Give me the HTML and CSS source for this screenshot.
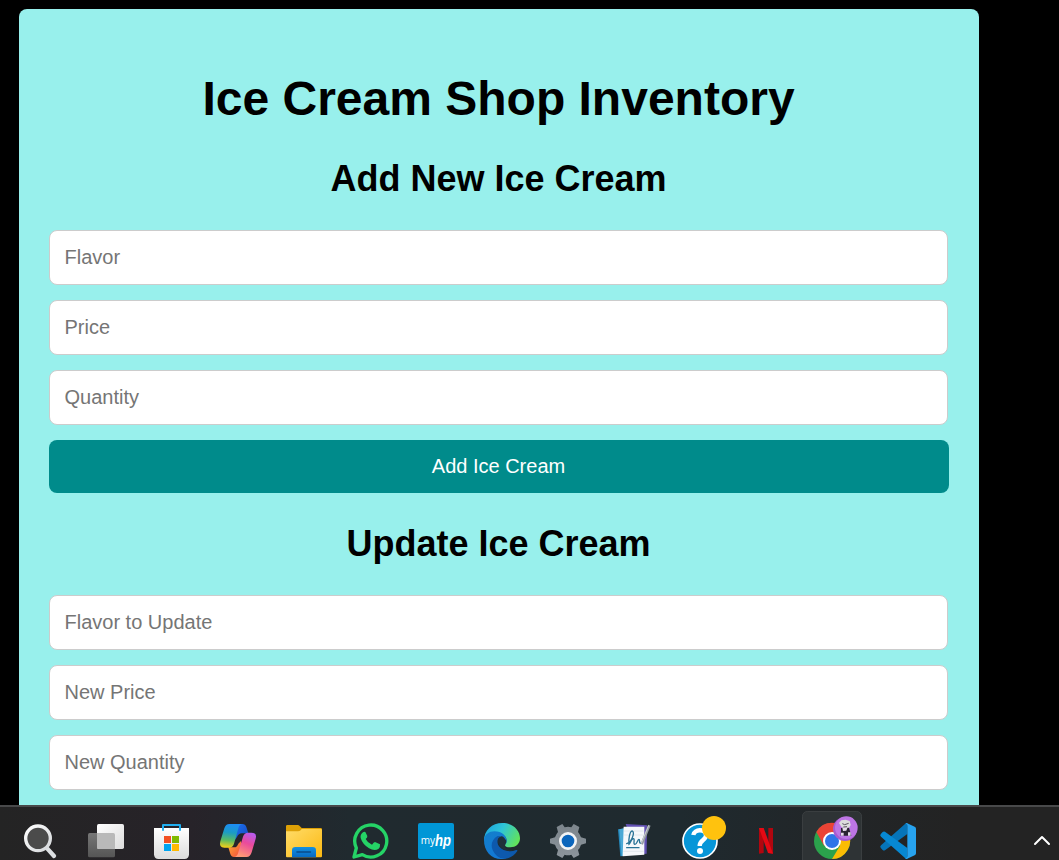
FILE: index.html
```html
<!DOCTYPE html>
<html lang="en">
<head>
<meta charset="utf-8">
<title>Ice Cream Shop Inventory</title>
<link rel="stylesheet" href="styles.css">
</head>
<body>
<main class="viewport">
  <section class="container">
    <h1 class="title">Ice Cream Shop Inventory</h1>
    <h2 class="subtitle">Add New Ice Cream</h2>
    <form class="form">
      <input class="field" type="text" placeholder="Flavor">
      <input class="field" type="text" placeholder="Price">
      <input class="field" type="text" placeholder="Quantity">
      <button class="submit" type="button">Add Ice Cream</button>
    </form>
    <h2 class="subtitle subtitle-update">Update Ice Cream</h2>
    <form class="form">
      <input class="field" type="text" placeholder="Flavor to Update">
      <input class="field" type="text" placeholder="New Price">
      <input class="field" type="text" placeholder="New Quantity">
    </form>
  </section>
</main>
<footer class="taskbar">
  <nav class="apps">
    <!-- Search -->
    <svg class="app" viewBox="21 21 198 159">
      <defs><linearGradient id="lens" x1="0" y1="0" x2="1" y2="1"><stop offset="0" stop-color="#fff"/><stop offset="1" stop-color="#d4d7da"/></linearGradient></defs>
      <path d="M142 146L162 168" stroke="#dde0e3" stroke-width="13" stroke-linecap="round"/>
      <circle cx="114" cy="115" r="37" fill="#4b4b4b" stroke="url(#lens)" stroke-width="10"/>
    </svg>
    <!-- Task view -->
    <svg class="app" viewBox="219 21 198 159">
      <defs>
        <linearGradient id="pane" x1="0" y1="0" x2="1" y2="1"><stop offset="0" stop-color="#fff"/><stop offset="1" stop-color="#dcdcdc"/></linearGradient>
        <linearGradient id="back" x1="0" y1="0" x2="0" y2="1"><stop offset="0" stop-color="#777"/><stop offset="1" stop-color="#555"/></linearGradient>
      </defs>
      <rect x="264" y="99" width="81" height="73" rx="5" fill="url(#back)"/>
      <rect x="291" y="72" width="81" height="75" rx="5" fill="url(#pane)"/>
      <path d="M291 99h49q5 0 5 5v43h-49q-5 0-5-5z" fill="#b9b9b9"/>
    </svg>
    <!-- Store -->
    <svg class="app" viewBox="417 21 198 159">
      <defs><linearGradient id="bag" x1="0" y1="0" x2="0" y2="1"><stop offset="0" stop-color="#fff"/><stop offset="1" stop-color="#dcdcdc"/></linearGradient></defs>
      <path d="M462 84h105v79q0 14-14 14h-77q-14 0-14-14z" fill="url(#bag)"/>
      <path d="M489 92V75h51v17" fill="none" stroke="#20aef0" stroke-width="6" stroke-linejoin="round"/>
      <path fill="#f25022" d="M492 108h21v21h-21z"/><path fill="#7fba00" d="M516 108h21v21h-21z"/>
      <path fill="#00a4ef" d="M492 132h21v21h-21z"/><path fill="#ffb900" d="M516 132h21v21h-21z"/>
    </svg>
    <!-- Copilot -->
    <svg class="app" viewBox="15 21 198 159">
      <defs>
        <linearGradient id="coolA" x1="0.4" y1="0" x2="0.3" y2="1"><stop offset="0" stop-color="#1d8df5"/><stop offset=".35" stop-color="#1b9cc5"/><stop offset=".68" stop-color="#5abb62"/><stop offset="1" stop-color="#f5cf17"/></linearGradient>
        <linearGradient id="coolB" x1="0" y1="0" x2="1" y2="1"><stop offset="0" stop-color="#1b72f2"/><stop offset="1" stop-color="#1748bd"/></linearGradient>
        <linearGradient id="warmA" x1="0.8" y1="0" x2="0.4" y2="1"><stop offset="0" stop-color="#b65cf2"/><stop offset=".45" stop-color="#ea4a9b"/><stop offset="1" stop-color="#ff9a75"/></linearGradient>
        <linearGradient id="warmB" x1="0" y1="0" x2="1" y2="1"><stop offset="0" stop-color="#ffb132"/><stop offset="1" stop-color="#ef4a3e"/></linearGradient>
      </defs>
      <path d="M105 72h22q9 0 12 9l6 19h-20q-9 0-14 11l-7 10z" fill="url(#coolB)"/>
      <path d="M124 171h-22q-8 0-11-9l-6-20h18q8 0 12-11l8-8z" fill="url(#warmB)"/>
      <path d="M88 72h38q-8 1-11 13l-13 46q-4 12-14 12H73q-17 0-12-19l12-39q4-13 15-13z" fill="url(#coolA)"/>
      <path d="M140 171h-37q9-1 12-14l14-47q4-12 15-12h10q18 0 13 18l-12 41q-4 14-15 14z" fill="url(#warmA)"/>
    </svg>
    <!-- File Explorer -->
    <svg class="app" viewBox="213 21 198 159">
      <defs>
        <linearGradient id="folder" x1="0" y1="0" x2="1" y2="1"><stop offset="0" stop-color="#ffdc69"/><stop offset="1" stop-color="#fcb912"/></linearGradient>
        <linearGradient id="dock" x1="0" y1="0" x2="0" y2="1"><stop offset="0" stop-color="#1391e0"/><stop offset="1" stop-color="#0869c3"/></linearGradient>
      </defs>
      <path d="M258 79q0-4 4-4h31q4 0 6 3l6 6h57q4 0 4 4v30H258z" fill="#dda006"/>
      <path d="M258 94h36q5 0 8-3l3-4h57q4 0 4 4v78q0 3-3 3H261q-3 0-3-3z" fill="url(#folder)"/>
      <path d="M276 172v-21q0-10 10-10h52q10 0 10 10v21z" fill="url(#dock)"/>
      <path d="M291 156h40" stroke="#0a4b8a" stroke-width="5" stroke-linecap="round"/>
    </svg>
    <!-- WhatsApp -->
    <svg class="app" viewBox="411 21 198 159">
      <path d="M462 171l7-27a48 48 0 1 1 18 20z" fill="none" stroke="#25d366" stroke-width="10" stroke-linejoin="round"/>
      <path d="M489 97q-9 7-7 17 5 18 25 31 17 9 29 1 5-4 4-13l-15-7q-4 0-9 8-13-5-19-17 6-4 5-9l-6-12q-3-2-7 1z" fill="#25d366"/>
    </svg>
    <!-- myHP -->
    <svg class="app" viewBox="9 21 198 159">
      <rect x="54" y="69" width="108" height="108" rx="6" fill="#0096d6"/>
      <text class="hp-my" x="62" y="132" textLength="43" lengthAdjust="spacingAndGlyphs">my</text>
      <text class="hp-hp" x="105" y="137" textLength="48" lengthAdjust="spacingAndGlyphs">hp</text>
    </svg>
    <!-- Edge -->
    <svg class="app" viewBox="207 21 198 159">
      <defs>
        <linearGradient id="wave" x1="0" y1="0.2" x2="1" y2="0.6"><stop offset="0" stop-color="#1ba5df"/><stop offset=".45" stop-color="#2fc5d7"/><stop offset="1" stop-color="#62e35a"/></linearGradient>
        <linearGradient id="deep" x1="0" y1="0" x2="0.7" y2="1"><stop offset="0" stop-color="#137fca"/><stop offset="1" stop-color="#1277d8"/></linearGradient>
      </defs>
      <path d="M252 122C252 91 276 69 307 69c32 0 53 22 53 46 0 17-13 27-29 27-14 0-18-5-15-9 8-12 3-25-12-31z" fill="url(#wave)"/>
      <path d="M252 119c2-16 16-25 31-25 24 0 37 15 37 28q0 7-4 11c-5-14-14-23-26-18-8 5-9 15-6 26 5 18 24 32 43 29-8 5-16 7-23 7-30 0-53-24-52-58z" fill="url(#deep)"/>
      <path d="M293 108c-17 9-22 27-15 42 8 18 23 27 38 26 16-2 27-10 36-23 1-3-1-4-4-3-22 10-51-1-55-20-1-8 2-15 9-21z" fill="#0d59ad"/>
      <path d="M304 109c-11 3-14 13-8 24 9 18 30 23 48 17-18 3-36-5-28-17 3-4 3-8 2-12-4-7-8-12-14-12z" fill="#20303a"/>
    </svg>
    <!-- Settings -->
    <svg class="app" viewBox="405 21 198 159">
      <defs><linearGradient id="gear" x1="0" y1="0" x2="0" y2="1"><stop offset="0" stop-color="#7c858c"/><stop offset="1" stop-color="#8c949b"/></linearGradient></defs>
      <path d="M487 72l7 10q10-3 20 0l7-10 17 9-4 15q6 7 9 16l15 4v14l-15 4q-3 10-9 16l4 15-17 9-7-10q-10 3-20 0l-7 10-17-9 4-15q-6-6-9-16l-15-4v-14l15-4q3-9 9-16l-4-15z" fill="url(#gear)"/>
      <circle cx="504" cy="123" r="23" fill="#0c66bc" stroke="#f3f4f5" stroke-width="8"/>
    </svg>
    <!-- Journal -->
    <svg class="app" viewBox="3 21 198 159">
      <path d="M77 72l64 4-1 85-30 2z" fill="#6251b3"/>
      <path d="M54 88l22-2 4 80-19 3z" fill="#2589bd"/>
      <path d="M58 88l25-6 7 79-25 8z" fill="#4ba8d5"/>
      <path d="M71 80h62v84l-65 5z" fill="#f5f8fb"/>
      <path d="M72 93h59M72 105h59M70 154h61" stroke="#d7dfe7" stroke-width="2"/>
      <path d="M80 131c15-3 25-33 17-38-8-2-12 28-10 40 4-3 7-17 13-17s-2 17 5 17c6 0 8-16 12-15 4 0-2 13 7 12M80 143h37" fill="none" stroke="#277296" stroke-width="4" stroke-linecap="round"/>
      <path d="M148 76l-23 57" stroke="#949aa1" stroke-width="8"/><path d="M146 76l-22 54" stroke="#c8cdd2" stroke-width="3"/>
    </svg>
    <!-- Support assistant -->
    <svg class="app" viewBox="201 21 198 159">
      <circle cx="300" cy="123" r="51" fill="#0796d8" stroke="#fff" stroke-width="5"/>
      <path d="M280 105c3-18 36-20 38 0 2 15-20 15-19 33" fill="none" stroke="#fff" stroke-width="13"/>
      <circle cx="300" cy="153" r="9" fill="#fff"/>
      <circle cx="342" cy="84" r="36" fill="#ffc20e"/>
    </svg>
    <!-- Netflix -->
    <svg class="app" viewBox="399 21 198 159">
      <path d="M477 84h14v75l-14 2zM505 84h14v77l-14-2z" fill="#b1060f"/>
      <path d="M477 84h14l28 77-15-2z" fill="#e50914"/>
    </svg>
    <!-- Chrome, with profile badge -->
    <svg class="app app-active" viewBox="57 21 198 159">
      <rect class="active-tile" x="67.500" y="34.500" width="177" height="170" rx="14"/>
      <circle cx="156" cy="123" r="54" fill="#2ba24c"/>
      <path d="M109 96A54 54 0 0 1 203 96H156z" fill="#ea4335"/>
      <path d="M109 96L132 137 156 123V96z" fill="#ea4335"/>
      <path d="M203 96A54 54 0 0 1 156 177L180 137 156 96z" fill="#fbbc04"/>
      <circle cx="156" cy="123" r="27" fill="#fff"/><circle cx="156" cy="123" r="21" fill="#2f75e8"/>
      <circle cx="195" cy="87" r="36" fill="#a85bd0"/><circle cx="199" cy="83" r="34" fill="#bd75e5"/>
      <path d="M183 79l-6-10 7-8 13-2 12 4 3 12-5 9-15 2z" fill="#ddd"/>
      <path d="M183 84l24-1 7 24h-32z" fill="#292331"/><path d="M187 83l16-1-4 10-10 1zM183 98h8v9h-8zM204 97h8v10h-8z" fill="#e6dcea"/>
      <path d="M187 71l7 3 12-4M190 81l11-1" fill="none" stroke="#5c5360" stroke-width="3"/>
    </svg>
    <!-- VS Code -->
    <svg class="app" viewBox="255 21 198 159">
      <path d="M303 145q-5-4 0-9l72-64q3-3 7-3v33l-67 49q-4 2-7-1z" fill="#0674b9"/>
      <path d="M303 101q-5 4 0 9l72 64q3 3 7 3V144L315 95q-4-2-7 1z" fill="#0788d2"/>
      <path d="M380 69l24 11q4 2 4 6v74q0 4-4 6l-24 11q-3 1-5-3 7 2 7-5V77q0-7-7-5z" fill="#27a3ef"/>
    </svg>
  </nav>
  <svg class="chevron" viewBox="0 0 18 12"><path d="M2 10L9 3L16 10"/></svg>
</footer>
</body>
</html>
```

FILE: styles.css
```css
* {
  box-sizing: border-box;
}

body {
  display: flex;
  flex-direction: column;
  height: 860px;
  margin: 0;
  overflow: hidden;
  background: #000;
  font-family: "Liberation Sans", Arial, sans-serif;
}

.viewport {
  flex: 1;
  min-height: 0;
  overflow: hidden;
  padding: 9px 80px 0 19px;
}

.container {
  height: 1200px;
  padding: 63px 31px 30px 30px;
  border-radius: 8px;
  background: #98f0ec;
  color: #000;
  text-align: center;
}

.title {
  margin: 0;
  font-size: 48px;
  line-height: 54px;
}

.subtitle {
  margin: 32px 0 31px;
  font-size: 36px;
  line-height: 41px;
}

.subtitle-update {
  margin-top: 30px;
}

.form {
  display: flex;
  flex-direction: column;
  gap: 15px;
}

.field {
  width: 899px;
  height: 55px;
  margin: 0;
  padding: 0 14.500px;
  border: 1px solid #ccc;
  border-radius: 8px;
  background: #fff;
  font: 20px "Liberation Sans", Arial, sans-serif;
}

.field::placeholder {
  color: #757575;
  opacity: 1;
}

.submit {
  width: 900px;
  height: 53px;
  padding: 0 1px 1px 0;
  border: 0;
  border-radius: 8px;
  background: #008b8b;
  color: #fff;
  font: 20px "Liberation Sans", Arial, sans-serif;
}

.taskbar {
  display: flex;
  justify-content: space-between;
  height: 55px;
  padding: 0 8px 0 7px;
  border-top: 2px solid #48494a;
  background: linear-gradient(90deg, #242424 0, #272329 190px, #202a2f 350px, #1f2a2f 680px, #222527 850px, #232323 960px);
}

.apps {
  display: flex;
}

.app {
  display: block;
  width: 66px;
  height: 53px;
}

.active-tile {
  fill: #2e3335;
  stroke: #3a3e40;
  stroke-width: 3;
}

.hp-my,
.hp-hp {
  fill: #fff;
  font-family: "Open Sans", sans-serif;
}

.hp-my {
  font-size: 32px;
}

.hp-hp {
  font-family: "Liberation Sans", sans-serif;
  font-size: 48px;
  font-style: italic;
  font-weight: 700;
}

.chevron {
  width: 18px;
  height: 12px;
  margin-top: 27px;
  fill: none;
  stroke: #fff;
  stroke-width: 2;
  stroke-linecap: round;
  stroke-linejoin: round;
}
```
